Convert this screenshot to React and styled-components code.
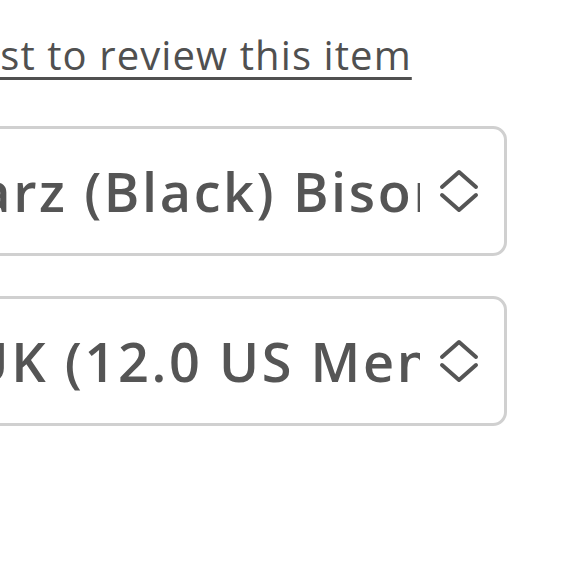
import React from "react";
import styled, { createGlobalStyle } from "styled-components";

const Global = createGlobalStyle`
  html, body { margin: 0; padding: 0; background: #ffffff; overflow: hidden; }
  body { font-family: "Open Sans", "Noto Sans", sans-serif; }
`;

const Column = styled.div`
  width: 688px;
  margin-left: -181px;
  padding-top: 28px;
  display: flex;
  flex-direction: column;
`;

const ReviewLink = styled.a`
  align-self: flex-start;
  font-size: 40px;
  line-height: 54px;
  letter-spacing: 1.1px;
  color: #505050;
  text-decoration: underline;
  text-decoration-thickness: 3px;
  text-underline-offset: 7px;
  white-space: nowrap;
  cursor: pointer;
`;

const Fields = styled.div`
  margin-top: 44px;
  display: flex;
  flex-direction: column;
  gap: 40px;
`;

const SelectBox = styled.div`
  box-sizing: border-box;
  height: 130px;
  border: 3px solid #d0d0d0;
  border-radius: 14px;
  background: #fff;
  display: flex;
  align-items: center;
  gap: 19px;
  padding: 0 25px 0 12px;
`;

const Value = styled.span`
  flex: 1;
  min-width: 0;
  overflow: hidden;
  white-space: nowrap;
  font-size: 54px;
  font-weight: 600;
  letter-spacing: 2.6px;
  color: #555555;
  line-height: 1.2;
`;

const Chevrons = () => (
  <svg width="40" height="44" viewBox="0 0 40 44" fill="none" stroke="#555555" strokeWidth="4" strokeLinecap="round" strokeLinejoin="round">
    <polyline points="3,18 20,3 37,18" />
    <polyline points="3,26 20,41 37,26" />
  </svg>
);

const Select = ({ value }) => (
  <SelectBox role="combobox">
    <Value>{value}</Value>
    <Chevrons />
  </SelectBox>
);

export default function App() {
  return (
    <>
      <Global />
      <Column>
        <ReviewLink>Be the first to review this item</ReviewLink>
        <Fields>
          <Select value="Schwarz (Black) Bison" />
          <Select value="11.0 UK (12.0 US Men)" />
        </Fields>
      </Column>
    </>
  );
}
